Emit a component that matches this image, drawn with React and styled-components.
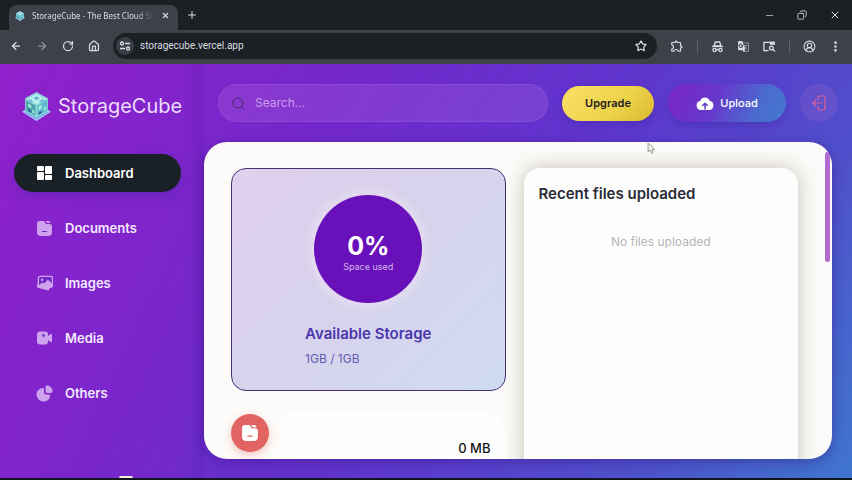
import React from "react";
import styled, { createGlobalStyle } from "styled-components";
import {
  ArrowLeft, ArrowRight, RotateCw, House, X, Plus, Minus, Copy, Star,
  CircleUserRound, EllipsisVertical, Search,
} from "lucide-react";
import { MdOutlineExtension, MdOutlineGTranslate } from "react-icons/md";

const GlobalStyle = createGlobalStyle`
  * { box-sizing: border-box; }
  body { margin: 0; background: #11161c; font-family: "Inter", "Noto Sans", sans-serif; }
  button, input { font: inherit; color: inherit; }
  button { border: 0; padding: 0; background: none; cursor: pointer; }
  a { color: inherit; text-decoration: none; }
  h1, h2, h3, p { margin: 0; }
  svg { display: block; flex: none; }
`;

const Window = styled.div`
  height: 100vh;
  display: flex;
  flex-direction: column;
  overflow: hidden;
  border-bottom: 2px solid #11161c;
`;

const TabStrip = styled.header`
  flex: none;
  height: 30px;
  display: flex;
  align-items: flex-end;
  padding-left: 9px;
  background: #1b2024;
  color: #d9dce4;
`;

const Tab = styled.div`
  width: 169px;
  height: 25px;
  display: flex;
  align-items: center;
  gap: 7px;
  padding: 0 8px 4px 6px;
  border-radius: 8px 8px 0 0;
  background: #3e4148;
`;

const TabTitle = styled.span`
  flex: 1;
  min-width: 0;
  white-space: nowrap;
  font: 8px/14px "Noto Sans", sans-serif;
  mask-image: linear-gradient(90deg, #000 85%, transparent);
`;

const PlainButton = styled.button`
  display: grid;
  place-items: center;
  flex: none;
  opacity: ${(p) => (p.$dim ? 0.5 : 1)};
`;

const NewTab = styled(PlainButton)`
  height: 30px;
  width: 28px;
`;

const WindowControls = styled.div`
  height: 30px;
  margin-left: auto;
  padding-right: 11px;
  display: flex;
  align-items: center;
  gap: 22px;
`;

const Toolbar = styled.nav`
  flex: none;
  height: 34px;
  display: flex;
  align-items: center;
  gap: 13px;
  padding: 0 10px 2px 10px;
  background: #3e4148;
  color: #d9dce4;
`;

const ToolGroup = styled.div`
  display: flex;
  align-items: center;
  gap: 14px;
`;

const AddressBar = styled.label`
  flex: 1;
  min-width: 0;
  height: 26px;
  display: flex;
  align-items: center;
  gap: 6px;
  padding: 0 10px 0 3px;
  border-radius: 13px;
  background: #1b2024;
`;

const SiteInfo = styled.span`
  width: 18px;
  height: 18px;
  display: grid;
  place-items: center;
  border-radius: 50%;
  background: #3a3f47;
`;

const AddressInput = styled.input`
  flex: 1;
  min-width: 0;
  border: 0;
  outline: 0;
  padding: 0;
  background: transparent;
  font: 10px/16px "Roboto", sans-serif;
`;

const Divider = styled.span`
  width: 1px;
  height: 14px;
  background: #60646f;
`;

const Page = styled.div`
  flex: 1;
  min-height: 0;
  display: grid;
  grid-template-columns: 204px minmax(0, 1fr);
  background: linear-gradient(125deg, #8c22cc 0%, #7328cc 32%, #6034ce 55%, #4f50cb 80%, #3f76ce 100%);
`;

const Sidebar = styled.aside`
  display: flex;
  flex-direction: column;
  min-height: 0;
  padding: 26px 23px 0 14px;
  overflow: hidden;
  background: linear-gradient(90deg, rgba(160, 25, 200, 0.2) 0%, rgba(150, 25, 200, 0.1) 90%, rgba(60, 10, 130, 0.14));
`;

const Brand = styled.a`
  display: flex;
  align-items: center;
  gap: 7px;
  padding-left: 8px;
  height: 32px;
  color: #eadcfb;
  font-size: 20px;
  line-height: 28px;
  white-space: nowrap;
`;

const NavList = styled.nav`
  display: flex;
  flex-direction: column;
  gap: 17px;
  padding-top: 32px;
`;

const NavItem = styled.a`
  flex: none;
  height: 38px;
  display: flex;
  align-items: center;
  gap: 12px;
  padding-left: 22px;
  border-radius: 19px;
  font-size: 13px;
  font-weight: 600;
  color: ${(p) => (p.$active ? "#ffffff" : "#f4e9fd")};
  background: ${(p) => (p.$active ? "#192127" : "transparent")};
  box-shadow: ${(p) => (p.$active ? "0 4px 12px rgba(60, 40, 160, 0.35)" : "none")};

  svg { color: ${(p) => (p.$active ? "#ffffff" : "#cfa2ef")}; }
`;

const Illustration = styled.div`
  margin: auto auto 0 105px;
  width: 14px;
  height: 2px;
  border-radius: 7px 7px 0 0;
  background: #f3eeda;
`;

const Main = styled.main`
  display: flex;
  flex-direction: column;
  min-width: 0;
  min-height: 0;
  padding: 20px 14px 19px 0;
`;

const TopBar = styled.div`
  flex: none;
  display: flex;
  align-items: center;
  gap: 14px;
  padding-left: 14px;
  height: 38px;
`;

const SearchBox = styled.label`
  flex: 1;
  min-width: 0;
  height: 38px;
  display: flex;
  align-items: center;
  gap: 9px;
  padding: 0 12px;
  border: 1px solid rgba(255, 255, 255, 0.08);
  border-radius: 19px;
  background: rgba(190, 120, 225, 0.22);
  color: #3d2a5c;
`;

const SearchInput = styled.input`
  flex: 1;
  min-width: 0;
  border: 0;
  outline: 0;
  padding: 0;
  background: transparent;
  font-size: 12px;
  line-height: 18px;

  &::placeholder { color: #cc9cee; opacity: 1; }
`;

const ActionButton = styled.button`
  display: flex;
  align-items: center;
  justify-content: center;
  gap: 6px;
  width: ${(p) => (p.$gold ? "92px" : "118px")};
  height: ${(p) => (p.$gold ? "35px" : "38px")};
  border-radius: 19px;
  font-size: 11px;
  font-weight: ${(p) => (p.$gold ? 600 : 500)};
  color: ${(p) => (p.$gold ? "#1f1c22" : "#ffffff")};
  background: ${(p) =>
    p.$gold
      ? "linear-gradient(135deg, #fae067 0%, #edd34a 60%, #dcb82c 100%)"
      : "linear-gradient(115deg, #7a25c4 0%, #6738cb 40%, #4b6bcf 75%, #4478ce 100%)"};
  box-shadow: 0 4px 9px rgba(50, 30, 150, 0.32);
`;

const LogoutButton = styled.button`
  width: 38px;
  height: 38px;
  display: grid;
  place-items: center;
  border-radius: 50%;
  background: rgba(150, 105, 200, 0.24);
  color: #d7639a;
`;

const Panel = styled.section`
  flex: 1;
  min-height: 0;
  display: flex;
  align-items: flex-start;
  margin: 20px 6px 0 0;
  padding: 10px 2px 0 27px;
  gap: 27px;
  overflow: hidden;
  border-radius: 23px;
  background: #fcfbf9;
  box-shadow: 0 3px 12px rgba(40, 10, 110, 0.38);
`;

const Columns = styled.div`
  flex: 1;
  min-width: 0;
  display: grid;
  grid-template-columns: 1fr 1fr;
  gap: 18px;
  padding-top: 16px;
`;

const ScrollThumb = styled.div`
  width: 5px;
  height: 110px;
  border-radius: 3px;
  background: #b36bd4;
`;

const Column = styled.div`
  min-width: 0;
  display: flex;
  flex-direction: column;
  gap: 23px;
`;

const StorageCard = styled.article`
  height: 223px;
  display: flex;
  flex-direction: column;
  align-items: center;
  padding-top: 26px;
  border: 1px solid #443070;
  border-radius: 15px;
  background: linear-gradient(135deg, #e0d0ee 0%, #d7d3ec 50%, #cfdbf2 100%);
`;

const Gauge = styled.div`
  flex: none;
  width: 108px;
  height: 108px;
  display: flex;
  flex-direction: column;
  align-items: center;
  padding-top: 36px;
  border-radius: 50%;
  background: #6811bb;
  color: #ffffff;
  box-shadow: 0 0 0 4px rgba(225, 216, 238, 0.5), 0 0 7px 5px rgba(235, 232, 245, 0.55);
`;

const Percent = styled.strong`
  font-size: 25px;
  line-height: 30px;
`;

const GaugeLabel = styled.span`
  font-size: 9px;
  line-height: 11px;
  color: #d6b8ee;
`;

const StorageText = styled.div`
  margin-top: 20px;
`;

const CardTitle = styled.h2`
  font-size: 15px;
  line-height: 22px;
  font-weight: 600;
  white-space: nowrap;
  color: ${(p) => (p.$accent ? "#4b35ac" : "#282a35")};
`;

const Amount = styled.p`
  margin-top: 4px;
  font-size: 12px;
  line-height: 20px;
  color: #6658b5;
`;

const CategoryCard = styled.article`
  height: 120px;
  display: flex;
  align-items: flex-start;
  justify-content: space-between;
  padding-right: 15px;
  border-radius: 20px;
  background: radial-gradient(circle at 19px 19px, transparent 25px, #fefefe 44px);
`;

const CategoryBadge = styled.div`
  width: 38px;
  height: 38px;
  display: grid;
  place-items: center;
  border-radius: 50%;
  background: #e26462;
  color: #ffffff;
  box-shadow: 0 3px 9px rgba(230, 110, 100, 0.38);
`;

const CategorySize = styled.p`
  padding-top: 24px;
  font-size: 13px;
  line-height: 20px;
  font-weight: 500;
  color: #17161a;
`;

const RecentCard = styled.article`
  min-height: 420px;
  padding: 15px;
  border-radius: 16px;
  background: #fefdfd;
  box-shadow: 0 0 20px rgba(110, 100, 65, 0.38);
`;

const EmptyState = styled.p`
  padding-top: 27px;
  text-align: center;
  font-size: 12px;
  line-height: 20px;
  color: #b5b4b7;
`;

const CubeLogo = ({ size }) => (
  <svg width={size} height={size} viewBox="0 0 28 28" aria-hidden="true">
    <path d="m0 19 3-2h22l3 2-14 9z" fill="#a8c5f5" />
    <path d="m2 19 3-1h18l3 1-12 7z" fill="#5b8fe0" />
    <path d="M14 0 25 6v13l-11 6-11-6V6z" fill="#8ad8dc" />
    <path d="m14 2 9 5-9 5-9-5z" fill="#b8ece8" />
    <path d="m4 8 9 5v10l-9-5z" fill="#4fa3b0" />
    <path d="m15 13 9-5v10l-9 5z" fill="#5ab4cb" />
    <path d="m14 4 3 2-3 2-3-2zM8 7l3 2-2 1-3-2zM20 7l2 1-4 2-2-1z" fill="#6ab5d5" />
    <path d="m6 11 3 2v3l-3-2zM10 17l2 1v3l-2-1zM16 14l3-2v4l-3 2zM21 15l2-1v3l-2 1z" fill="#a9f0d6" />
    <path d="m6 16 3 2v2l-3-2zM16 20l3-2v2l-3 2z" fill="#28629d" />
  </svg>
);

const DashboardIcon = () => (
  <svg width="17" height="16" viewBox="0 0 17 16" fill="currentColor" aria-hidden="true">
    <rect x="1" y="1" width="7" height="5" rx="1" />
    <rect x="1" y="7" width="7" height="8" rx="1" />
    <rect x="9" y="1" width="7" height="8" rx="1" />
    <rect x="9" y="10" width="7" height="5" rx="1" />
  </svg>
);

const FolderIcon = ({ size = 17, line = "#7429c7" }) => (
  <svg width={size} height={size} viewBox="0 0 17 17" aria-hidden="true">
    <path d="M4 1h3c1 0 1.500.4 2 1.200L10 4h3.500q2.500 0 2.500 2.500V12q0 4-4 4H5q-4 0-4-4V4q0-3 3-3z" fill="currentColor" />
    <path d="M9.500 1H12q2.300 0 2.700 2h-3.500z" fill="currentColor" />
    <path d="M6.500 11.500h4" stroke={line} strokeWidth="1.200" strokeLinecap="round" />
  </svg>
);

const ImagesIcon = () => (
  <svg width="17" height="16" viewBox="0 0 18 17" aria-hidden="true">
    <path d="M3 6 1 11.500q-.5 1.500 1 2L13 16.500q1 0 1.500-2.500" fill="currentColor" />
    <rect x="2.500" y="1.500" width="15" height="11.500" rx="2" fill="#7429c7" stroke="currentColor" strokeWidth="1.500" />
    <circle cx="6.500" cy="5" r="1.300" fill="currentColor" />
    <path d="m3 11 3.500-3 2 1 4-4 4.500 4v4H3z" fill="currentColor" />
  </svg>
);

const MediaIcon = () => (
  <svg width="17" height="16" viewBox="0 0 17 16" fill="currentColor" aria-hidden="true">
    <rect x="1" y="1.500" width="11" height="13" rx="3" />
    <path d="m12 6 2.500-2q1.500-1 1.500 1v6q0 2-1.500 1L12 10z" />
    <circle cx="7.500" cy="5.500" r="1.400" fill="#7033c8" />
  </svg>
);

const OthersIcon = () => (
  <svg width="17" height="17" viewBox="0 0 17 17" fill="currentColor" aria-hidden="true">
    <path d="M7 3C3.500 3 .5 6 .5 9.500S3.500 16.500 7.500 16.500 14 14 14 10.500Q14 9.500 12.500 9.500H10Q8 9.500 8 7V4Q8 3 7 3z" />
    <path d="M9.500 1.500Q9.500.5 11 .5c3 0 5.500 2.500 5.500 5.500 0 1.500-1 2-2 2h-3q-2 0-2-2z" />
  </svg>
);

const TuneIcon = () => (
  <svg width="12" height="12" viewBox="0 0 12 12" fill="none" stroke="currentColor" strokeWidth="1.300" aria-hidden="true">
    <circle cx="3" cy="3.500" r="1.500" /><path d="M6 3.500h5M1 8.500h5" /><circle cx="9" cy="8.500" r="1.500" />
  </svg>
);

const IncognitoIcon = () => (
  <svg width="13" height="13" viewBox="0 0 13 13" fill="none" stroke="currentColor" strokeWidth="1.300" aria-hidden="true">
    <path d="M1 6.500h11" /><path d="M3 6 4.300 2h4.400L10 6z" /><path d="M5 10q1.500-1 3 0" />
    <circle cx="3.500" cy="10" r="1.600" /><circle cx="9.500" cy="10" r="1.600" />
  </svg>
);

const ScreenSearchIcon = () => (
  <svg width="13" height="13" viewBox="0 0 14 13" fill="none" stroke="currentColor" strokeWidth="1.400" aria-hidden="true">
    <path d="M6 11H1V2h11v3" /><path d="M8 2h4v2H8z" fill="currentColor" />
    <circle cx="9" cy="8" r="2" /><path d="m10.500 9.500 2.500 2.500" />
  </svg>
);

const CloudUploadIcon = () => (
  <svg width="18" height="15" viewBox="0 0 18 15" aria-hidden="true">
    <path d="M5 14a4.500 4.500 0 0 1-.8-8.900 5 5 0 0 1 9.600 0A4.500 4.500 0 0 1 13 14z" fill="currentColor" />
    <path d="M9 13V7.500M6.700 9.500 9 7.200l2.300 2.300" fill="none" stroke="#623fc9" strokeWidth="1.500" strokeLinecap="round" strokeLinejoin="round" />
  </svg>
);

const LogoutIcon = () => (
  <svg width="15" height="16" viewBox="0 0 15 16" fill="none" stroke="currentColor" strokeWidth="1.200" strokeLinecap="round" strokeLinejoin="round" aria-hidden="true">
    <path d="M6 5V3q0-2 2-2h3q2 0 2 2v10q0 2-2 2H8q-2 0-2-2v-2" />
    <path d="M10 8H1M3.500 5.500 1 8l2.500 2.500" />
  </svg>
);

const PointerLayer = styled.div`
  position: absolute;
  left: 647px;
  top: 142px;
  pointer-events: none;
`;

const Pointer = () => (
  <PointerLayer>
    <svg width="9" height="13" viewBox="0 0 9 13" aria-hidden="true">
      <path d="m1 1 .2 9 2-2 1.600 3.500 1.500-.8L4.800 7.500h3z" fill="#f5f3ee" stroke="#9e9c9a" strokeWidth="1" />
    </svg>
  </PointerLayer>
);

const NAV = [
  ["Dashboard", DashboardIcon],
  ["Documents", FolderIcon],
  ["Images", ImagesIcon],
  ["Media", MediaIcon],
  ["Others", OthersIcon],
];

export default function App() {
  return (
    <>
      <GlobalStyle />
      <Window>
        <TabStrip>
          <Tab>
            <CubeLogo size={10} />
            <TabTitle>StorageCube - The Best Cloud Sto</TabTitle>
            <PlainButton aria-label="Close tab"><X size={9} strokeWidth={3} /></PlainButton>
          </Tab>
          <NewTab aria-label="New tab"><Plus size={12} /></NewTab>
          <WindowControls>
            <PlainButton aria-label="Minimize"><Minus size={11} strokeWidth={1.5} /></PlainButton>
            <PlainButton aria-label="Restore"><Copy size={10} transform="scale(-1 1)" /></PlainButton>
            <PlainButton aria-label="Close"><X size={12} strokeWidth={2} /></PlainButton>
          </WindowControls>
        </TabStrip>
        <Toolbar aria-label="Browser">
          <ToolGroup>
            <PlainButton aria-label="Back"><ArrowLeft size={12} strokeWidth={2.5} /></PlainButton>
            <PlainButton aria-label="Forward" $dim><ArrowRight size={12} strokeWidth={2.5} /></PlainButton>
            <PlainButton aria-label="Reload"><RotateCw size={12} strokeWidth={2.5} /></PlainButton>
            <PlainButton aria-label="Home"><House size={12} strokeWidth={2.5} /></PlainButton>
          </ToolGroup>
          <AddressBar>
            <SiteInfo><TuneIcon /></SiteInfo>
            <AddressInput aria-label="Address" defaultValue="storagecube.vercel.app" />
            <Star size={12} strokeWidth={2.5} />
          </AddressBar>
          <PlainButton aria-label="Extensions"><MdOutlineExtension size={14} /></PlainButton>
          <Divider />
          <PlainButton aria-label="Incognito"><IncognitoIcon /></PlainButton>
          <PlainButton aria-label="Translate"><MdOutlineGTranslate size={13} /></PlainButton>
          <PlainButton aria-label="Search screen"><ScreenSearchIcon /></PlainButton>
          <Divider />
          <PlainButton aria-label="Profile"><CircleUserRound size={13} /></PlainButton>
          <PlainButton aria-label="Menu"><EllipsisVertical size={13} strokeWidth={3} /></PlainButton>
        </Toolbar>
        <Page>
          <Sidebar>
            <Brand href="#"><CubeLogo size={29} />StorageCube</Brand>
            <NavList aria-label="Main">
              {NAV.map(([label, Icon], i) => (
                <NavItem key={label} href="#" $active={i === 0}><Icon />{label}</NavItem>
              ))}
            </NavList>
            <Illustration />
          </Sidebar>
          <Main>
            <TopBar>
              <SearchBox>
                <Search size={15} strokeWidth={1.5} />
                <SearchInput aria-label="Search" placeholder="Search..." />
              </SearchBox>
              <ActionButton $gold>Upgrade</ActionButton>
              <ActionButton><CloudUploadIcon />Upload</ActionButton>
              <LogoutButton aria-label="Log out"><LogoutIcon /></LogoutButton>
            </TopBar>
            <Panel>
              <Columns>
                <Column>
                  <StorageCard>
                    <Gauge>
                      <Percent>0%</Percent>
                      <GaugeLabel>Space used</GaugeLabel>
                    </Gauge>
                    <StorageText>
                      <CardTitle $accent>Available Storage</CardTitle>
                      <Amount>1GB / 1GB</Amount>
                    </StorageText>
                  </StorageCard>
                  <CategoryCard>
                    <CategoryBadge><FolderIcon size={18} line="#e26462" /></CategoryBadge>
                    <CategorySize>0 MB</CategorySize>
                  </CategoryCard>
                </Column>
                <RecentCard>
                  <CardTitle>Recent files uploaded</CardTitle>
                  <EmptyState>No files uploaded</EmptyState>
                </RecentCard>
              </Columns>
              <ScrollThumb />
            </Panel>
          </Main>
        </Page>
      </Window>
      <Pointer />
    </>
  );
}
